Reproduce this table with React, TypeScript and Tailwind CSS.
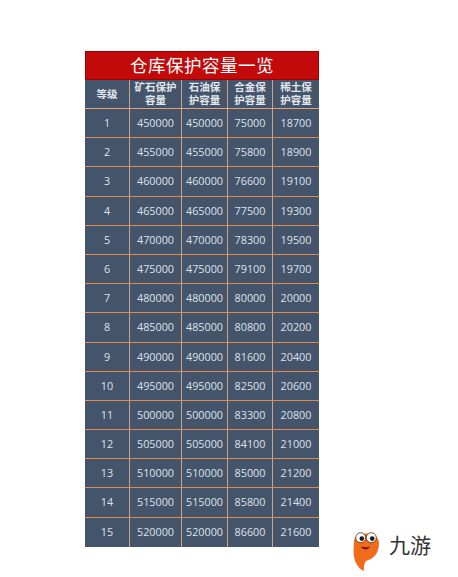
import React from "react";

const rows = [
  [1, 450000, 450000, 75000, 18700],
  [2, 455000, 455000, 75800, 18900],
  [3, 460000, 460000, 76600, 19100],
  [4, 465000, 465000, 77500, 19300],
  [5, 470000, 470000, 78300, 19500],
  [6, 475000, 475000, 79100, 19700],
  [7, 480000, 480000, 80000, 20000],
  [8, 485000, 485000, 80800, 20200],
  [9, 490000, 490000, 81600, 20400],
  [10, 495000, 495000, 82500, 20600],
  [11, 500000, 500000, 83300, 20800],
  [12, 505000, 505000, 84100, 21000],
  [13, 510000, 510000, 85000, 21200],
  [14, 515000, 515000, 85800, 21400],
  [15, 520000, 520000, 86600, 21600],
];

const cols = "grid grid-cols-[45px_52px_46px_45px_46px]";
const font = { fontFamily: '"Open Sans", "Noto Sans CJK SC", sans-serif' };

function Mascot() {
  return (
    <svg width="26" height="42" viewBox="0 0 26 42">
      <path
        d="M1 13 C0 2, 26 1, 26 14 C26 25, 20 30, 13 32 C11 35, 10.5 38, 11 42 C4 39, 0.5 31, 0.5 22 Z"
        fill="#f26a1b"
      />
      <circle cx="7.7" cy="8.7" r="5" fill="#fff" stroke="#5a2a10" strokeWidth="0.8" />
      <circle cx="18.3" cy="8.7" r="5" fill="#fff" stroke="#5a2a10" strokeWidth="0.8" />
      <circle cx="8.8" cy="9.6" r="2.3" fill="#1a1a1a" />
      <circle cx="19.2" cy="9.6" r="2.3" fill="#1a1a1a" />
      <path d="M8 17.5 C10 21.5, 15 21.5, 17 17.5 C14 18.5, 11 18.5, 8 17.5 Z" fill="#6e1a08" />
    </svg>
  );
}

export default function App() {
  return (
    <div className="relative w-[458px] h-[577px] bg-white overflow-hidden" style={font}>
      <div className="pt-[51px] pl-[85px]">
        <div className="w-[234px] bg-[#44546a]">
          <div className="h-[29px] bg-[#c20a0a] border border-[#a00000] flex items-center justify-center text-white text-[17.5px] leading-none tracking-[0.5px]">
            仓库保护容量一览
          </div>
          <div className={`${cols} h-[29px] border-b border-[#e9a070] text-[#e2e6ec] text-[10.5px] font-bold leading-[13px]`}>
            <div className="flex items-center justify-center border-r border-[#c9a488]">等级</div>
            <div className="flex items-center justify-center text-center border-r border-[#c9a488]">矿石保护<br />容量</div>
            <div className="flex items-center justify-center text-center border-r border-[#c9a488]">石油保<br />护容量</div>
            <div className="flex items-center justify-center text-center border-r border-[#c9a488]">合金保<br />护容量</div>
            <div className="flex items-center justify-center text-center">稀土保<br />护容量</div>
          </div>
          {rows.map((r, i) => (
            <div
              key={i}
              className={`${cols} h-[29.2px] text-[#dde2ea] text-[10.8px] ${i < rows.length - 1 ? "border-b border-[#e08a50]" : ""}`}
            >
              {r.map((v, j) => (
                <div
                  key={j}
                  className={`flex items-center justify-center ${j < 4 ? "border-r border-[#c9a488]" : ""}`}
                >
                  {v}
                </div>
              ))}
            </div>
          ))}
        </div>
      </div>
      <div className="absolute left-[353px] top-[529px] flex items-start gap-[10px]">
        <Mascot />
        <span
          className="mt-[5px] text-[21px] leading-none text-[#333]"
          style={{ fontFamily: '"Noto Sans CJK SC", sans-serif' }}
        >
          九游
        </span>
      </div>
    </div>
  );
}
